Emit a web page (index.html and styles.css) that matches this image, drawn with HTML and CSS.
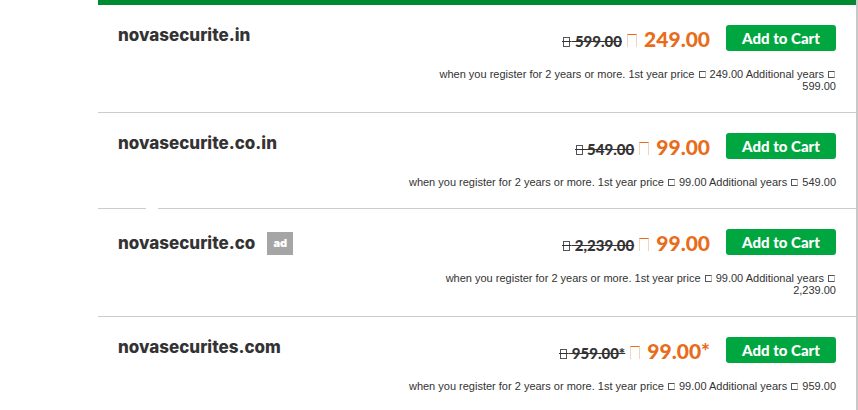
FILE: index.html
```html
<!DOCTYPE html>
<html lang="en">
<head>
<meta charset="utf-8">
<title>Domain results</title>
<link rel="stylesheet" href="styles.css">
</head>
<body>
<main class="results">
  <section class="row">
    <h2 class="domain">novasecurite.in</h2>
    <div class="offer">
      <div class="buy">
        <p class="prices"><s class="old"><span class="cur cur-old"></span> 599.00</s> <strong class="now"><span class="cur cur-lg"></span> 249.00</strong></p>
        <button class="cart" type="button">Add to Cart</button>
      </div>
      <p class="terms">when you register for 2 years or more. 1st year price <span class="cur cur-sm"></span> 249.00 Additional years <span class="cur cur-sm"></span> 599.00</p>
    </div>
  </section>
  <section class="row row-gap">
    <h2 class="domain">novasecurite.co.in</h2>
    <div class="offer">
      <div class="buy">
        <p class="prices"><s class="old"><span class="cur cur-old"></span> 549.00</s> <strong class="now"><span class="cur cur-lg"></span> 99.00</strong></p>
        <button class="cart" type="button">Add to Cart</button>
      </div>
      <p class="terms">when you register for 2 years or more. 1st year price <span class="cur cur-sm"></span> 99.00 Additional years <span class="cur cur-sm"></span> 549.00</p>
    </div>
  </section>
  <section class="row">
    <h2 class="domain">novasecurite.co <span class="ad">ad</span></h2>
    <div class="offer">
      <div class="buy">
        <p class="prices"><s class="old"><span class="cur cur-old"></span> 2,239.00</s> <strong class="now"><span class="cur cur-lg"></span> 99.00</strong></p>
        <button class="cart" type="button">Add to Cart</button>
      </div>
      <p class="terms">when you register for 2 years or more. 1st year price <span class="cur cur-sm"></span> 99.00 Additional years <span class="cur cur-sm"></span> 2,239.00</p>
    </div>
  </section>
  <section class="row">
    <h2 class="domain">novasecurites.com</h2>
    <div class="offer">
      <div class="buy">
        <p class="prices"><s class="old"><span class="cur cur-old"></span> 959.00*</s> <strong class="now"><span class="cur cur-lg"></span> 99.00*</strong></p>
        <button class="cart" type="button">Add to Cart</button>
      </div>
      <p class="terms">when you register for 2 years or more. 1st year price <span class="cur cur-sm"></span> 99.00 Additional years <span class="cur cur-sm"></span> 959.00</p>
    </div>
  </section>
</main>
</body>
</html>
```
FILE: styles.css
```css
* { box-sizing: border-box; }

body {
  margin: 0;
  background: #fff;
  color: #333;
  font-family: Lato, "Liberation Sans", sans-serif;
}

.results {
  min-height: 100vh;
  margin-left: 98px;
  border-right: 2px solid #c8c8c8;
}

.results::before {
  content: "";
  display: block;
  height: 5px;
  background: #008a32;
}

.row {
  position: relative;
  display: flex;
  justify-content: space-between;
  padding: 20px;
  border-bottom: 1px solid #ccc;
}

.row:last-child { border-bottom: 0; }

.row-gap::after {
  content: "";
  position: absolute;
  left: 48px;
  bottom: -1px;
  width: 12px;
  height: 1px;
  background: #fff;
}

.domain {
  display: flex;
  align-items: center;
  align-self: flex-start;
  gap: 12px;
  margin: 0;
  padding-top: 1px;
  font-family: Inter, "Liberation Sans", sans-serif;
  font-size: 17px;
  font-weight: 800;
  line-height: 18px;
}

.ad {
  margin-top: 2px;
  padding: 3px 6px;
  background: #a5a5a5;
  color: #fff;
  font-size: 11px;
  font-weight: 900;
  line-height: 17px;
}

.offer {
  flex: 0 0 430px;
  display: flex;
  flex-direction: column;
  align-items: flex-end;
  gap: 17px;
}

.buy {
  display: flex;
  gap: 16px;
  height: 26px;
}

.prices {
  margin: 0;
  padding-top: 1px;
  line-height: 26px;
  white-space: nowrap;
}

.old {
  font-size: 15px;
  font-weight: 900;
}

.now {
  color: #e86c1a;
  font-size: 21px;
  font-weight: 900;
}

.cur {
  position: relative;
  display: inline-block;
  border: 1px solid #555;
}

.cur-old {
  width: 7px;
  height: 10px;
  margin: 0 1px;
}

.cur-old::after {
  content: "";
  position: absolute;
  top: 3px;
  left: -2px;
  width: 9px;
  height: 1px;
  background: #333;
}

.cur-lg {
  width: 10px;
  height: 13px;
  margin: 0 2px 0 1px;
  border-color: #e86c1a #f6d3bb;
  border-bottom: 0;
}

.cur-sm {
  width: 7px;
  height: 7px;
  margin: 0 1px;
  border-right-color: #bbb;
}

.cart {
  width: 110px;
  height: 26px;
  padding: 0;
  border: 0;
  border-radius: 3px;
  background: #00a63f;
  color: #fff;
  font-family: inherit;
  font-size: 15px;
  font-weight: 900;
  line-height: 26px;
}

.terms {
  margin: 0;
  font-family: "Liberation Sans", Arial, sans-serif;
  font-size: 11px;
  line-height: 12px;
  text-align: right;
}
```
